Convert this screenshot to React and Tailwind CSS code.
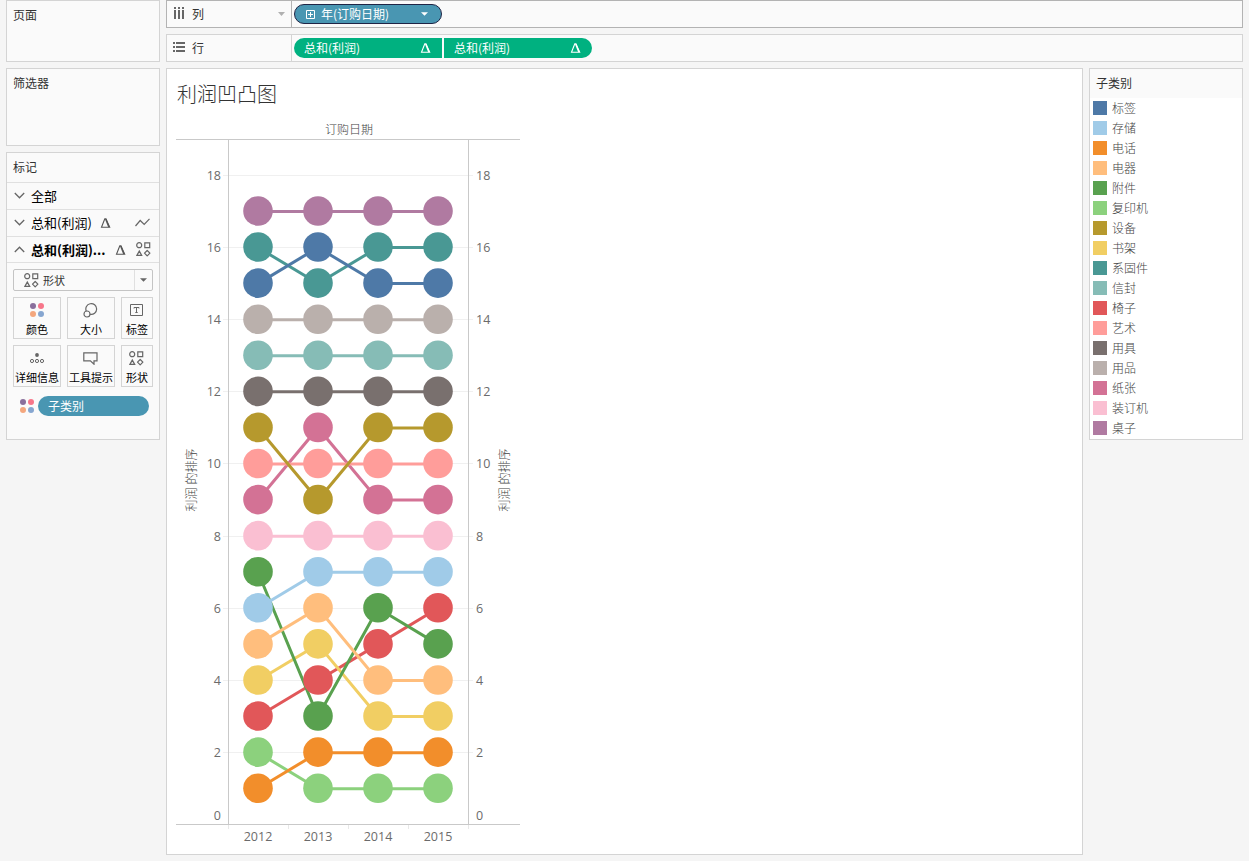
import React from "react";

// rank per year, 2012 - 2015
const SERIES = [
  { name: "标签", color: "#4e79a7", ranks: [15, 16, 15, 15] },
  { name: "存储", color: "#a0cbe8", ranks: [6, 7, 7, 7] },
  { name: "电话", color: "#f28e2b", ranks: [1, 2, 2, 2] },
  { name: "电器", color: "#ffbe7d", ranks: [5, 6, 4, 4] },
  { name: "附件", color: "#59a14f", ranks: [7, 3, 6, 5] },
  { name: "复印机", color: "#8cd17d", ranks: [2, 1, 1, 1] },
  { name: "设备", color: "#b6992d", ranks: [11, 9, 11, 11] },
  { name: "书架", color: "#f1ce63", ranks: [4, 5, 3, 3] },
  { name: "系固件", color: "#499894", ranks: [16, 15, 16, 16] },
  { name: "信封", color: "#86bcb6", ranks: [13, 13, 13, 13] },
  { name: "椅子", color: "#e15759", ranks: [3, 4, 5, 6] },
  { name: "艺术", color: "#ff9d9a", ranks: [10, 10, 10, 10] },
  { name: "用具", color: "#79706e", ranks: [12, 12, 12, 12] },
  { name: "用品", color: "#bab0ac", ranks: [14, 14, 14, 14] },
  { name: "纸张", color: "#d37295", ranks: [9, 11, 9, 9] },
  { name: "装订机", color: "#fabfd2", ranks: [8, 8, 8, 8] },
  { name: "桌子", color: "#b07aa1", ranks: [17, 17, 17, 17] },
];

const YEARS = [2012, 2013, 2014, 2015];
const TICKS = [2, 4, 6, 8, 10, 12, 14, 16, 18];

const xOf = (i) => 258 + i * 60;
const yOf = (rank) => 824.7 - rank * 36.08;

function Delta({ className }) {
  return (
    <svg viewBox="0 0 10 10" className={className} fill="none" stroke="currentColor">
      <path d="M1 9.3 4.3.8h1.1L9.2 9.3z" strokeWidth="1.1" />
      <path d="M5.2 1 8.4 9" strokeWidth="1.5" />
    </svg>
  );
}

function Chevron({ up }) {
  return (
    <svg viewBox="0 0 11 7" className="h-[7px] w-[11px] shrink-0" fill="none" stroke="#666" strokeWidth="1.3">
      <path d={up ? "M.8 6 5.5 1.2 10.2 6" : "M.8 1 5.5 5.8 10.2 1"} />
    </svg>
  );
}

function ShapesIcon() {
  return (
    <svg viewBox="0 0 15 15" className="h-[15px] w-[15px] shrink-0" fill="none" stroke="#666" strokeWidth="1.2">
      <circle cx="3.2" cy="3.2" r="2.5" />
      <path d="M8.8.8h4.9v4.9H8.8zM.9 13.4l2.4-4.3 2.4 4.3z" />
      <path d="m11.2 8.5 2.7 2.7-2.7 2.7-2.7-2.7z" strokeLinejoin="round" />
    </svg>
  );
}

function ColorDots() {
  return (
    <svg viewBox="0 0 14 14" className="h-[14px] w-[14px] shrink-0">
      <circle cx="3" cy="3" r="3" fill="#8a6f9c" />
      <circle cx="11" cy="3" r="3" fill="#f7768a" />
      <circle cx="3" cy="11" r="3" fill="#f4a77e" />
      <circle cx="11" cy="11" r="3" fill="#86a6d0" />
    </svg>
  );
}

function SizeIcon() {
  return (
    <svg viewBox="0 0 15 15" className="h-[15px] w-[15px]" fill="none" stroke="#666" strokeWidth="1.2">
      <path d="M3.3 8.2A5.4 5.4 0 1 1 7.1 11.3" />
      <circle cx="4" cy="11" r="3" />
    </svg>
  );
}

function LabelIcon() {
  return (
    <svg viewBox="0 0 13 12" className="h-3 w-[13px]" fill="none" stroke="#666" strokeWidth="1">
      <path d="M.5.5h12v11H.5z" />
      <path d="M4 4.5v-1h5v1M6.5 3.5v5M5.3 8.5h2.4" />
    </svg>
  );
}

function DetailIcon() {
  return (
    <svg viewBox="0 0 14 11" className="h-[11px] w-[14px]" fill="none" stroke="#666" strokeWidth="1">
      <circle cx="7" cy="2" r="1.9" fill="#666" stroke="none" />
      <circle cx="2" cy="8" r="1.6" />
      <circle cx="7" cy="8" r="1.6" />
      <circle cx="12" cy="8" r="1.6" />
    </svg>
  );
}

function TooltipIcon() {
  return (
    <svg viewBox="0 0 15 13" className="h-[13px] w-[15px]" fill="none" stroke="#666" strokeWidth="1.2">
      <path d="M.8.8h13.2v8h-3v3.4l-3.6-3.4H.8z" />
    </svg>
  );
}

function MarkButton({ icon, label }) {
  return (
    <div className="flex h-[42px] flex-col items-center border border-[#d4d4d4] bg-[#fafafa]">
      <div className="flex h-6 w-full shrink-0 items-center justify-center pr-px">{icon}</div>
      <span className="-mt-px text-[11px] leading-4 whitespace-nowrap text-black">{label}</span>
    </div>
  );
}

function Sidebar() {
  return (
    <aside className="flex w-[154px] shrink-0 flex-col">
      <section className="h-[62px] border border-[#d4d4d4] bg-[#fafafa] px-1.5 pt-[5px] leading-[18px]">页面</section>
      <section className="mt-1.5 h-[78px] border border-[#d4d4d4] bg-[#fafafa] px-1.5 pt-[5px] leading-[18px]">
        筛选器
      </section>
      <section className="mt-1.5 h-72 border border-[#d4d4d4] bg-[#fafafa]">
        <h2 className="h-[29px] px-1.5 pt-[5px] leading-[18px]">标记</h2>
        <div className="flex h-[27px] items-center border-t border-[#e0e0e0] pb-px pl-[7px] text-[13px] text-black">
          <Chevron />
          <span className="ml-[6px]">全部</span>
        </div>
        <div className="flex h-[27px] items-center border-t border-[#e0e0e0] pr-[9px] pb-px pl-[7px] text-[13px] text-black">
          <Chevron />
          <span className="ml-[6px] w-[69px] whitespace-nowrap">总和(利润)</span>
          <Delta className="h-[10px] w-[11px] text-[#555]" />
          <svg viewBox="0 0 15 9" className="ml-auto h-[9px] w-[15px]" fill="none" stroke="#666" strokeWidth="1.2">
            <path d="M.5 8 5.2 2.5l4 4L14.5.8" />
          </svg>
        </div>
        <div className="flex h-[26px] items-center border-t border-[#e0e0e0] pr-2 pl-[7px] text-[13px] text-black">
          <Chevron up />
          <span className="ml-[6px] w-[84px] font-bold whitespace-nowrap">总和(利润)...</span>
          <Delta className="h-[10px] w-[11px] text-[#555]" />
          <span className="ml-auto">
            <ShapesIcon />
          </span>
        </div>
        <div className="border-t border-[#e0e0e0] px-1.5 pt-1.5">
          <div className="flex h-[22px] items-center rounded-xs border border-[#c4c4c4] bg-[#fafafa] pl-2.5 text-[11px]">
            <ShapesIcon />
            <span className="ml-1">形状</span>
            <div className="ml-auto flex h-full w-[18px] items-center justify-center border-l border-[#e0e0e0]">
              <svg viewBox="0 0 8 4" className="h-1 w-[7px]" fill="#666">
                <path d="M0 0h8L4 4z" />
              </svg>
            </div>
          </div>
          <div className="mt-1.5 grid grid-cols-[48px_48px_32px] gap-1.5">
            <MarkButton icon={<ColorDots />} label="颜色" />
            <MarkButton icon={<SizeIcon />} label="大小" />
            <MarkButton icon={<LabelIcon />} label="标签" />
            <MarkButton icon={<DetailIcon />} label="详细信息" />
            <MarkButton icon={<TooltipIcon />} label="工具提示" />
            <MarkButton icon={<ShapesIcon />} label="形状" />
          </div>
          <div className="mt-[9px] flex items-center gap-1 pl-[7px]">
            <ColorDots />
            <div className="flex h-5 w-[111px] items-center rounded-full bg-[#4996b2] pl-[10px] text-white">
              子类别
            </div>
          </div>
        </div>
      </section>
    </aside>
  );
}

function Shelves() {
  return (
    <>
      <div className="flex h-7 border border-[#b3b3b3] bg-[#fafafa]">
        <div className="flex w-[125px] items-center border-r border-[#b3b3b3] pr-1.5 pl-[7px]">
          <svg viewBox="0 0 10 12" className="mb-0.5 h-3 w-[10px]" fill="#666">
            <path d="M0 0h2v2H0zM4 0h2v2H4zM8 0h2v2H8zM0 3h2v9H0zM4 3h2v9H4zM8 3h2v9H8z" />
          </svg>
          <span className="ml-2">列</span>
          <svg viewBox="0 0 7 4" className="ml-auto h-1 w-[7px]" fill="#b0b0b0">
            <path d="M0 0h7L3.5 4z" />
          </svg>
        </div>
        <div className="flex items-center pl-0.5">
          <div className="flex h-5 w-[148px] items-center rounded-full border border-[#1f2445] bg-[#4996b2] pr-[13px] pb-px pl-[11px] text-white">
            <svg viewBox="0 0 9 9" className="mt-px h-[9px] w-[9px]" fill="none" stroke="currentColor">
              <path d="M.5.5h8v8h-8zM4.5 2v5M2 4.5h5" />
            </svg>
            <span className="ml-1.5">年(订购日期)</span>
            <svg viewBox="0 0 8 4" className="ml-auto h-1 w-[7px]" fill="currentColor">
              <path d="M0 0h8L4 4z" />
            </svg>
          </div>
        </div>
      </div>
      <div className="mt-1.5 flex h-7 border border-[#d4d4d4] bg-[#fafafa]">
        <div className="flex w-[125px] items-center border-r border-[#d4d4d4] pl-1.5">
          <svg viewBox="0 0 12 10" className="mb-0.5 h-[10px] w-3" fill="#666">
            <path d="M0 0h2v2H0zM0 4h2v2H0zM0 8h2v2H0zM3 0h9v2H3zM3 4h9v2H3zM3 8h9v2H3z" />
          </svg>
          <span className="ml-[7px]">行</span>
        </div>
        <div className="flex items-center gap-0.5 pl-0.5 text-white">
          <div className="flex h-5 w-[148px] items-center justify-between rounded-l-full bg-[#00b180] pr-[11px] pl-[10px]">
            <span>总和(利润)</span>
            <Delta className="h-[10px] w-[11px]" />
          </div>
          <div className="flex h-5 w-[148px] items-center justify-between rounded-r-full bg-[#00b180] pr-[11px] pl-[10px]">
            <span>总和(利润)</span>
            <Delta className="h-[10px] w-[11px]" />
          </div>
        </div>
      </div>
    </>
  );
}

function BumpChart() {
  return (
    <svg
      viewBox="176 124 346 724"
      width="346"
      height="724"
      className="font-['Open_Sans','Noto_Sans_CJK_SC',sans-serif] text-[12.5px]"
      fill="#6b6b6b"
    >
      <text x="349" y="133.5" textAnchor="middle" fontSize="12" fill="#444" className="font-light">
        订购日期
      </text>

      {TICKS.map((t) => {
        const y = Math.floor(yOf(t)) + 0.5;
        return (
          <g key={t}>
            <path d={`M223 ${y}H473`} stroke="#f0f0f0" />
            <text x="221" y={y + 4.5} textAnchor="end">
              {t}
            </text>
            <text x="476" y={y + 4.5}>
              {t}
            </text>
          </g>
        );
      })}
      <text x="221" y="820" textAnchor="end">
        0
      </text>
      <text x="476" y="820">
        0
      </text>

      <path d="M228.5 825v4M288.5 825v4M348.5 825v4M408.5 825v4M468.5 825v4" stroke="#e8e8e8" />
      <path d="M176 139.5H520M176 824.5H520M228.5 140V824M468.5 140V824" stroke="#c9c9c9" />

      {[...SERIES].reverse().map((s) => (
        <polyline
          key={s.name}
          points={s.ranks.map((r, i) => `${xOf(i)},${yOf(r) + 0.1}`).join(" ")}
          fill="none"
          stroke={s.color}
          strokeWidth="3"
        />
      ))}
      {SERIES.map((s) =>
        s.ranks.map((r, i) => <circle key={s.name + i} cx={xOf(i)} cy={yOf(r) - 0.4} r="14.8" fill={s.color} />)
      )}

      {YEARS.map((year, i) => (
        <text key={year} x={xOf(i)} y="841" textAnchor="middle">
          {year}
        </text>
      ))}
      <text transform="translate(196 480) rotate(-90)" textAnchor="middle" fontSize="12" fill="#444" className="font-light">
        利润 的排序
      </text>
      <text transform="translate(509 480) rotate(-90)" textAnchor="middle" fontSize="12" fill="#444" className="font-light">
        利润 的排序
      </text>
    </svg>
  );
}

function Legend() {
  return (
    <aside className="h-[372px] w-[154px] border border-[#d4d4d4] bg-white">
      <h2 className="h-[29px] bg-[#fafafa] px-1.5 pt-[5px] leading-[18px]">子类别</h2>
      <ul>
        {SERIES.map((s) => (
          <li key={s.name} className="flex h-5 items-center pl-[3px] text-[#444]">
            <span className="h-[14px] w-[14px]" style={{ backgroundColor: s.color }} />
            <span className="ml-[5px] font-light">{s.name}</span>
          </li>
        ))}
      </ul>
    </aside>
  );
}

export default function App() {
  return (
    <div className="flex h-[861px] w-[1249px] gap-1.5 overflow-hidden bg-[#f5f5f5] pl-1.5 font-['Noto_Sans_CJK_SC',sans-serif] text-[12px] text-[#333]">
      <Sidebar />
      <main className="w-[1077px]">
        <Shelves />
        <div className="mt-1.5 flex items-start gap-1.5">
          <section className="h-[787px] w-[917px] border border-[#d4d4d4] bg-white pl-[9px]">
            <h1 className="h-[55px] pt-2.5 pl-px text-[20px] leading-[30px] font-light">利润凹凸图</h1>
            <BumpChart />
          </section>
          <Legend />
        </div>
      </main>
    </div>
  );
}
